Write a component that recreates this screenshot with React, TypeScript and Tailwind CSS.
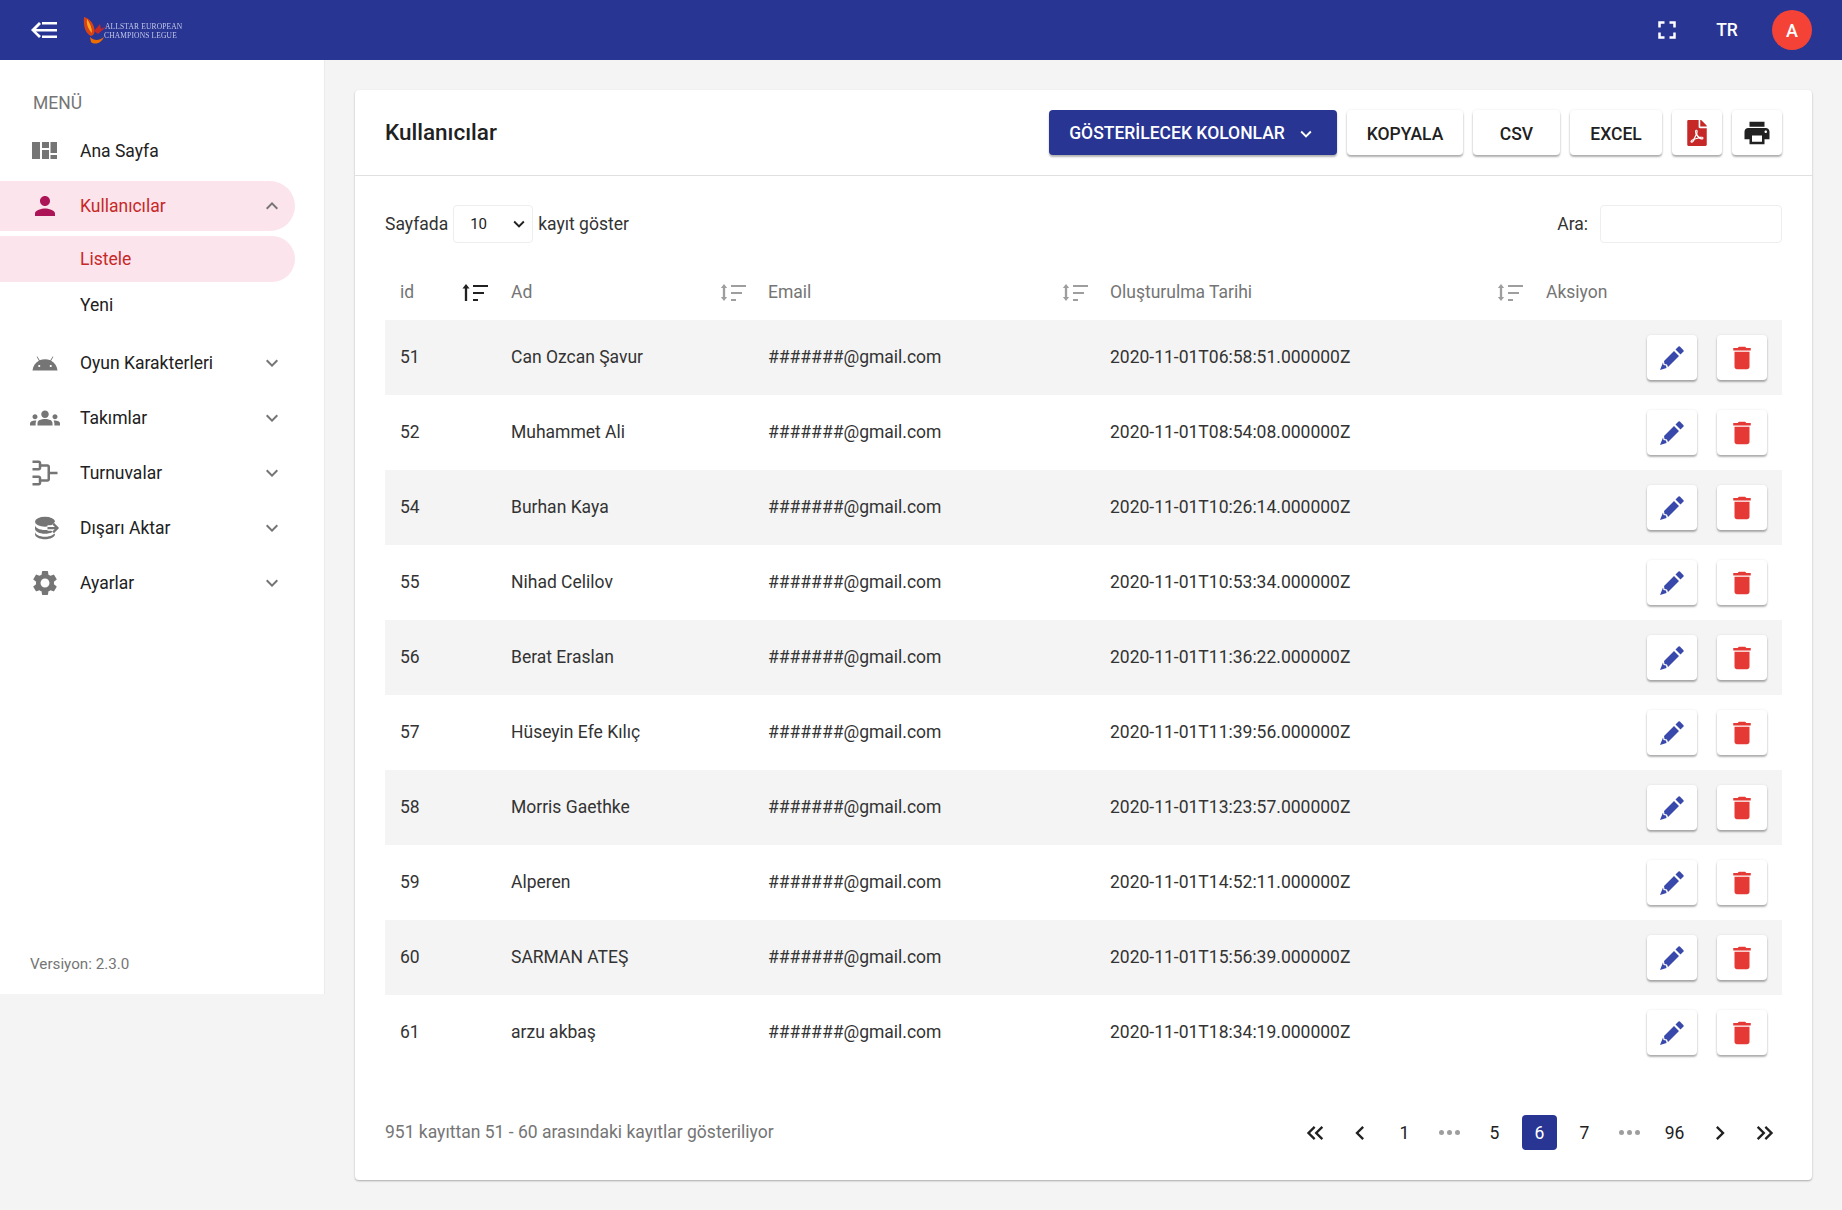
import { FaFilePdf } from "react-icons/fa";
import {
  MdDelete,
  MdFullscreen,
  MdGroups,
  MdKeyboardArrowDown,
  MdKeyboardArrowUp,
  MdPerson,
  MdPrint,
  MdSettings,
  MdChevronLeft,
  MdChevronRight,
  MdKeyboardDoubleArrowLeft,
  MdKeyboardDoubleArrowRight,
} from "react-icons/md";

const rows = [
  ["51", "Can Ozcan Şavur", "2020-11-01T06:58:51.000000Z"],
  ["52", "Muhammet Ali", "2020-11-01T08:54:08.000000Z"],
  ["54", "Burhan Kaya", "2020-11-01T10:26:14.000000Z"],
  ["55", "Nihad Celilov", "2020-11-01T10:53:34.000000Z"],
  ["56", "Berat Eraslan", "2020-11-01T11:36:22.000000Z"],
  ["57", "Hüseyin Efe Kılıç", "2020-11-01T11:39:56.000000Z"],
  ["58", "Morris Gaethke", "2020-11-01T13:23:57.000000Z"],
  ["59", "Alperen", "2020-11-01T14:52:11.000000Z"],
  ["60", "SARMAN ATEŞ", "2020-11-01T15:56:39.000000Z"],
  ["61", "arzu akbaş", "2020-11-01T18:34:19.000000Z"],
];

function SvgIcon({ d }: { d: string }) {
  return (
    <svg viewBox="0 0 24 24" className="w-[30px] h-[30px] fill-[#757575]">
      <path d={d} />
    </svg>
  );
}

const androidHead =
  "M16.61 15.15C16.15 15.15 15.77 14.78 15.77 14.32S16.15 13.5 16.61 13.5H16.61C17.07 13.5 17.45 13.86 17.45 14.32C17.45 14.78 17.07 15.15 16.61 15.15M7.41 15.15C6.95 15.15 6.57 14.78 6.57 14.32C6.57 13.86 6.95 13.5 7.41 13.5H7.41C7.87 13.5 8.24 13.86 8.24 14.32C8.24 14.78 7.87 15.15 7.41 15.15M16.91 10.14L18.58 7.26C18.67 7.09 18.61 6.88 18.45 6.79C18.28 6.69 18.07 6.75 18 6.92L16.29 9.83C14.95 9.22 13.5 8.9 12 8.91C10.47 8.91 9 9.24 7.73 9.82L6.04 6.91C5.95 6.74 5.74 6.68 5.57 6.78C5.4 6.87 5.35 7.08 5.44 7.25L7.1 10.13C4.25 11.69 2.29 14.58 2 18H22C21.72 14.59 19.77 11.7 16.91 10.14H16.91Z";
const tournament =
  "M2,2V4H7V8H2V10H7C8.11,10 9,9.11 9,8V7H14V17H9V16C9,14.89 8.11,14 7,14H2V16H7V20H2V22H7C8.11,22 9,21.11 9,20V19H14C15.11,19 16,18.11 16,17V13H22V11H16V7C16,5.89 15.11,5 14,5H9V4C9,2.89 8.11,2 7,2H2Z";

function DbExportIcon() {
  return (
    <svg viewBox="0 0 24 24" className="w-[30px] h-[30px]">
      <ellipse cx="12" cy="7" rx="8" ry="4" fill="#757575" />
      <path
        fill="#757575"
        d="M4 9.500C4 11.700 7.600 13.500 12 13.500S20 11.700 20 9.500V12.500C20 14.700 16.400 16.500 12 16.500S4 14.700 4 12.500Z"
      />
      <path fill="#757575" d="M4 15C4 17.200 7.600 19 12 19S20 17.200 20 15V17C20 19.200 16.400 21 12 21S4 19.200 4 17Z" />
      <path d="M14 12H21M18.500 8.500L22 12L18.500 15.500" fill="none" stroke="white" strokeWidth="4.500" />
      <path d="M14 12H21M18.500 8.500L22 12L18.500 15.500" fill="none" stroke="#757575" strokeWidth="1.800" />
    </svg>
  );
}

function PencilIcon() {
  return (
    <svg viewBox="0 0 24 24" className="w-[24px] h-[24px] fill-[#3949ab]">
      <path d="M15.500 3.500L18.500 .5Q19.200 0 19.900 .5L23.500 4.200Q24 5 23.500 5.500L20.500 8.500Z" />
      <path d="M14 5L19 10L8 21L7 18.500L4.500 18L4 15Z" />
      <path d="M3 16.500L3.500 19L6 19.500L6.500 22L0 24Z" />
    </svg>
  );
}

function SortIcon({ active }: { active?: boolean }) {
  const c = active ? "bg-[#212121]" : "bg-[#9e9e9e]";
  return (
    <span className="flex items-center gap-[3px] h-[19px]">
      <svg viewBox="0 0 9 19" className={`w-[8px] h-[19px] ${active ? "fill-[#212121]" : "fill-[#9e9e9e]"}`}>
        {active ? (
          <path d="M4.500 0L8.500 5H5.800V19H3.200V5H.5Z" />
        ) : (
          <path d="M4.500 0L8 4.500H5.800V14.500H8L4.500 19L1 14.500H3.200V4.500H1Z" />
        )}
      </svg>
      <span className="flex flex-col gap-[5px] w-[15px]">
        <span className={`h-[2px] w-[15px] ${c}`} />
        <span className={`h-[2px] w-[11px] ${c}`} />
        <span className={`h-[2px] w-[5px] ${c}`} />
      </span>
    </span>
  );
}

function NavItem({ icon, label }: { icon: React.ReactNode; label: string }) {
  return (
    <div className="flex items-center h-[50px] mb-[5px] pl-[30px] pr-[11px] w-[295px] text-[#212121]">
      <span className="w-[50px] flex items-center pr-[20px] justify-center shrink-0">{icon}</span>
      <span className="flex-1">{label}</span>
      <MdKeyboardArrowDown className="text-[24px] text-[#757575]" />
    </div>
  );
}

function ToolBtn({ children, w }: { children: React.ReactNode; w: string }) {
  return (
    <button
      type="button"
      className={`h-[45px] ${w} flex items-center justify-center rounded-[4px] bg-white text-[#212121] font-medium shadow-[0_2px_2px_rgba(0,0,0,0.3),0_0_3px_rgba(0,0,0,0.08)]`}
    >
      {children}
    </button>
  );
}

function PageItem({ children, active }: { children: React.ReactNode; active?: boolean }) {
  const isText = typeof children === "string";
  return (
    <span
      className={`w-[35px] h-[35px] flex items-center justify-center rounded-[4px] ${isText ? "pt-[2px]" : ""} ${
        active ? "bg-[#283593] text-white" : "text-[#212121]"
      }`}
    >
      {children}
    </span>
  );
}

function Dots() {
  return (
    <PageItem>
      <span className="flex gap-[3px]">
        <span className="w-[5px] h-[5px] rounded-full bg-[#9e9e9e]" />
        <span className="w-[5px] h-[5px] rounded-full bg-[#9e9e9e]" />
        <span className="w-[5px] h-[5px] rounded-full bg-[#9e9e9e]" />
      </span>
    </PageItem>
  );
}

export default function App() {
  return (
    <div className="min-h-screen bg-[#f4f4f4] text-[17.5px] font-['Roboto',sans-serif]">
      <header className="h-[60px] bg-[#283593] flex items-center pl-[31px] pr-[30px] text-white">
        <svg viewBox="0 0 26 16" className="w-[26px] h-[16px] fill-white">
          <path d="M8 0L10 2L5 7H26V9.500H5L10 14L8 16L0 8ZM11 0H26V2.500H11ZM11 13.500H26V16H11Z" />
        </svg>
        <div className="ml-[26px] flex items-center w-[100px] h-[30px] relative blur-[0.3px]">
          <svg viewBox="0 0 32 30" className="w-[32px] h-[30px] absolute left-0 top-0">
            <path d="M1 2C5 3 9 6 11 12C12 16 12 20 8 21C3 19 0 12 1 2Z" fill="#d84315" />
            <path d="M4 4C7 8 9 13 9 18C6 15 3 10 4 4Z" fill="#ffa726" />
            <path d="M7 22C11 26 16 26 21 22C18 29 11 30 8 27Z" fill="#ef6c00" />
            <path d="M11 16L17 9L18 14L24 11L15 19Z" fill="#c62828" />
          </svg>
          <div className="pl-[22px] pt-[1px] font-['Liberation_Serif',serif] text-[7.5px] leading-[9px] text-[#c5cae9] tracking-[0.15px] whitespace-nowrap uppercase">
            <div>Allstar European</div>
            <div className="-ml-[1px]">Champions Legue</div>
          </div>
        </div>
        <div className="ml-auto flex items-center">
          <MdFullscreen className="text-[30px]" />
          <span className="ml-[25px] w-[40px] text-center font-medium">TR</span>
          <span className="ml-[25px] w-[40px] h-[40px] rounded-full bg-[#f44336] flex items-center justify-center font-medium text-[18px]">
            A
          </span>
        </div>
      </header>

      <div className="flex items-start">
        <aside className="w-[324px] h-[934px] bg-white shadow-[1px_0_0_#ebebeb] flex flex-col pt-[30px]">
          <div className="pl-[33px] h-[24px] pt-[1px] leading-[24px] text-[#757575]">MENÜ</div>
          <div className="h-[11px]" />
          <div className="flex items-center h-[50px] mb-[6px] pl-[32px] text-[#212121]">
            <svg viewBox="0 0 25 17" className="w-[25px] h-[17px] mr-[23px] fill-[#757575]">
              <path d="M0 0H8V17H0ZM10 0H17V6H10ZM10 8H17V17H10ZM18.500 0H25V11H18.500ZM18.500 13H25V17H18.500Z" />
            </svg>
            <span className="pt-[2px]">Ana Sayfa</span>
          </div>
          <div className="flex items-center h-[50px] w-[295px] pl-[30px] pr-[11px] rounded-r-full bg-[#fce4ec] text-[#c62828]">
            <span className="w-[50px] pr-[20px] shrink-0 flex justify-center">
              <MdPerson className="text-[30px] text-[#ad1457]" />
            </span>
            <span className="flex-1">Kullanıcılar</span>
            <MdKeyboardArrowUp className="text-[24px] text-[#757575]" />
          </div>
          <div className="flex items-center h-[46px] mt-[5px] w-[295px] pl-[80px] rounded-r-full bg-[#fce4ec] text-[#c62828]">
            Listele
          </div>
          <div className="flex items-center h-[46px] pl-[80px] text-[#212121] mb-[10px]">Yeni</div>
          <NavItem icon={<SvgIcon d={androidHead} />} label="Oyun Karakterleri" />
          <NavItem icon={<MdGroups className="text-[30px] text-[#757575]" />} label="Takımlar" />
          <NavItem icon={<SvgIcon d={tournament} />} label="Turnuvalar" />
          <NavItem icon={<DbExportIcon />} label="Dışarı Aktar" />
          <NavItem icon={<MdSettings className="text-[30px] text-[#757575]" />} label="Ayarlar" />
          <div className="mt-auto pl-[30px] pb-[18px] text-[15.2px] text-[#757575]">Versiyon: 2.3.0</div>
        </aside>

        <main className="flex-1 pt-[30px] pl-[31px] pr-[30px]">
          <section className="h-[1090px] bg-white rounded-[4px] shadow-[0_1px_2px_rgba(0,0,0,0.3)]">
            <div className="h-[86px] border-b border-[#e0e0e0] flex items-center pl-[30px] pr-[30px]">
              <h1 className="text-[22.5px] font-medium text-[#212121]">Kullanıcılar</h1>
              <div className="ml-auto flex items-center gap-[10px]">
                <button
                  type="button"
                  className="h-[45px] w-[288px] pt-[2px] rounded-[4px] bg-[#283593] text-white font-medium flex items-center justify-center gap-[10px] shadow-[0_2px_2px_rgba(0,0,0,0.3)]"
                >
                  GÖSTERİLECEK KOLONLAR
                  <MdKeyboardArrowDown className="text-[22px]" />
                </button>
                <ToolBtn w="w-[116px] pt-[3px]">KOPYALA</ToolBtn>
                <ToolBtn w="w-[87px] pt-[3px]">CSV</ToolBtn>
                <ToolBtn w="w-[92px] pt-[3px]">EXCEL</ToolBtn>
                <ToolBtn w="w-[50px]">
                  <FaFilePdf className="text-[26px] text-[#c62828]" />
                </ToolBtn>
                <ToolBtn w="w-[50px]">
                  <MdPrint className="text-[30px] text-[#212121]" />
                </ToolBtn>
              </div>
            </div>

            <div className="px-[30px]">
              <div className="flex items-center h-[38px] mt-[29px] text-[#333333]">
                <span>Sayfada</span>
                <div className="ml-[5px] w-[80px] h-[38px] border border-[#eeeeee] rounded-[4px] flex items-center pl-[16px] pr-[2px] text-[15px] text-[#212121]">
                  <span className="flex-1">10</span>
                  <MdKeyboardArrowDown className="text-[22px]" />
                </div>
                <span className="ml-[5px]">kayıt göster</span>
                <span className="ml-auto">Ara:</span>
                <input className="ml-[12px] w-[182px] h-[38px] border border-[#eeeeee] rounded-[4px]" />
              </div>

              <div className="mt-[17px] grid grid-cols-[111px_257px_342px_436px_251px]">
                <div className="flex items-center justify-between h-[60px] pt-[5px] pl-[15px] pr-[8px] text-[#757575]">
                  id <SortIcon active />
                </div>
                <div className="flex items-center justify-between pt-[5px] pl-[15px] pr-[7px] text-[#757575]">
                  Ad <SortIcon />
                </div>
                <div className="flex items-center justify-between pt-[5px] pl-[15px] pr-[7px] text-[#757575]">
                  Email <SortIcon />
                </div>
                <div className="flex items-center justify-between pt-[5px] pl-[15px] pr-[8px] text-[#757575]">
                  Oluşturulma Tarihi <SortIcon />
                </div>
                <div className="flex items-center pt-[5px] pl-[15px] text-[#757575]">Aksiyon</div>
                {rows.map((r, i) => {
                  const bg = i % 2 === 0 ? "bg-[#f4f4f4]" : "bg-white";
                  return [
                    <div key={r[0] + "a"} className={`h-[75px] flex items-center pl-[15px] text-[#333333] ${bg}`}>{r[0]}</div>,
                    <div key={r[0] + "b"} className={`flex items-center pl-[15px] text-[#333333] ${bg}`}>{r[1]}</div>,
                    <div key={r[0] + "c"} className={`flex items-center pl-[15px] text-[#333333] ${bg}`}>#######@gmail.com</div>,
                    <div key={r[0] + "d"} className={`flex items-center pl-[15px] text-[#333333] ${bg}`}>{r[2]}</div>,
                    <div key={r[0] + "e"} className={`flex items-center justify-end gap-[20px] pr-[15px] ${bg}`}>
                      <ToolBtn w="w-[50px]"><PencilIcon /></ToolBtn>
                      <ToolBtn w="w-[50px]"><MdDelete className="text-[30px] text-[#e53935]" /></ToolBtn>
                    </div>,
                  ];
                })}
              </div>

              <div className="flex items-center mt-[45px] h-[35px] text-[#757575]">
                <span>951 kayıttan 51 - 60 arasındaki kayıtlar gösteriliyor</span>
                <div className="ml-auto flex items-center gap-[10px] text-[#212121]">
                  <PageItem><MdKeyboardDoubleArrowLeft className="text-[28px]" /></PageItem>
                  <PageItem><MdChevronLeft className="text-[28px]" /></PageItem>
                  <PageItem>1</PageItem>
                  <Dots />
                  <PageItem>5</PageItem>
                  <PageItem active>6</PageItem>
                  <PageItem>7</PageItem>
                  <Dots />
                  <PageItem>96</PageItem>
                  <PageItem><MdChevronRight className="text-[28px]" /></PageItem>
                  <PageItem><MdKeyboardDoubleArrowRight className="text-[28px]" /></PageItem>
                </div>
              </div>
            </div>
          </section>
        </main>
      </div>
    </div>
  );
}
